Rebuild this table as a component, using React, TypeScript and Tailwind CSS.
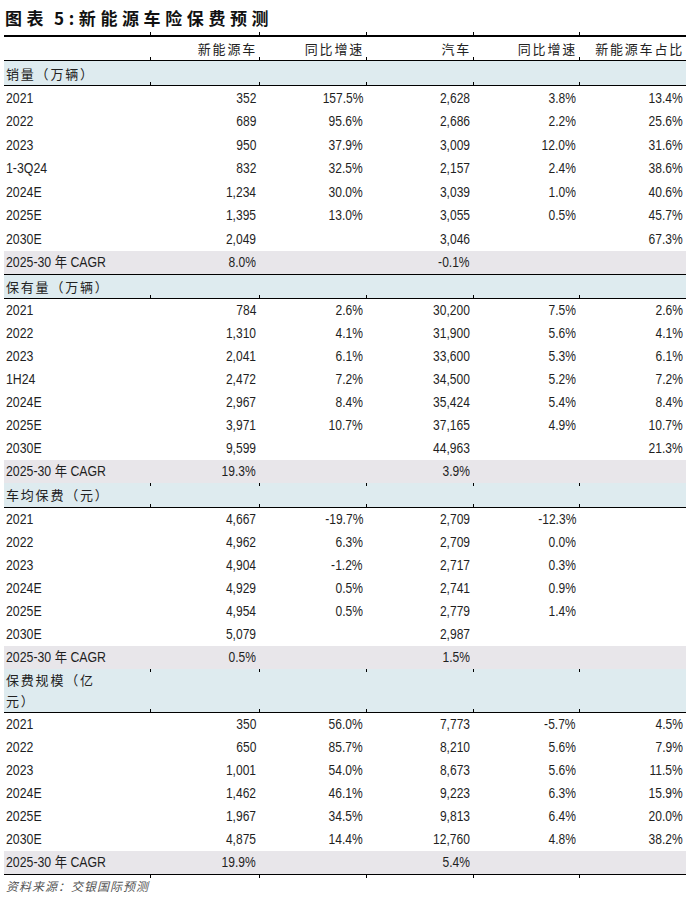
import React from "react";

type Row = [string, string, string, string, string, string];

const GRID = "grid grid-cols-[146px_109px_107px_107px_106px_107px]";
const NUM = "font-['Liberation_Sans','Noto_Sans_CJK_SC',Arial,sans-serif]";
const CJK = "font-['Noto_Sans_CJK_SC',sans-serif]";

// small tick marks drawn as background images at the left edge of a cell
const TICK_BOTTOM =
  "[background-image:linear-gradient(#000,#000)] [background-size:1px_3px] [background-repeat:no-repeat] [background-position:0_100%]";
const TICK_TOP =
  "[background-image:linear-gradient(#000,#000)] [background-size:1px_3px] [background-repeat:no-repeat] [background-position:0_0]";
const TICK_BOTH =
  "[background-image:linear-gradient(#000,#000),linear-gradient(#000,#000)] [background-size:1px_3px,1px_3px] [background-repeat:no-repeat,no-repeat] [background-position:0_0,0_100%]";

function TickStrip() {
  return (
    <div className={`${GRID} h-[3px]`}>
      <div />
      <div className={TICK_TOP} />
      <div className={TICK_TOP} />
      <div className={TICK_TOP} />
      <div className={TICK_TOP} />
      <div className={TICK_TOP} />
    </div>
  );
}

function Cells({ r }: { r: Row }) {
  return (
    <>
      <div className="pl-[2px] whitespace-nowrap">
        <span className="inline-block origin-left scale-x-[0.88]">{r[0]}</span>
      </div>
      {r.slice(1).map((c, i) => (
        <div key={i} className="text-right pr-[3px] whitespace-nowrap">
          <span className="inline-block origin-right scale-x-[0.86]">{c}</span>
        </div>
      ))}
    </>
  );
}

function DataRow({ r, h }: { r: Row; h: string }) {
  return (
    <div className={`${GRID} ${h} items-center text-[14px] leading-[18px] text-[#1f1f1f] ${NUM}`}>
      <Cells r={r} />
    </div>
  );
}

function CagrRow({ r }: { r: Row }) {
  return (
    <div className={`${GRID} h-[23px] items-center bg-[#e8e6ea] text-[14px] leading-[18px] text-[#1f1f1f] ${NUM}`}>
      <Cells r={r} />
    </div>
  );
}

function SectionRow({
  children,
  tall,
  border,
  topTicks,
}: {
  children: React.ReactNode;
  tall?: boolean;
  border?: boolean;
  topTicks?: boolean;
}) {
  const tick = topTicks ? TICK_BOTH : TICK_BOTTOM;
  return (
    <div
      className={`${GRID} ${tall ? "h-[44px]" : "h-[25px]"} ${
        border ? "border-t border-black" : ""
      } border-b border-black bg-[#deebef]`}
    >
      <div className={`flex items-center pl-[2px] text-[13px] leading-[21px] tracking-[1.8px] text-[#222] whitespace-nowrap ${CJK}`}>
        <div>{children}</div>
      </div>
      <div className={tick} />
      <div className={tick} />
      <div className={tick} />
      <div className={tick} />
      <div className={tick} />
    </div>
  );
}

const s1: Row[] = [
  ["2021", "352", "157.5%", "2,628", "3.8%", "13.4%"],
  ["2022", "689", "95.6%", "2,686", "2.2%", "25.6%"],
  ["2023", "950", "37.9%", "3,009", "12.0%", "31.6%"],
  ["1-3Q24", "832", "32.5%", "2,157", "2.4%", "38.6%"],
  ["2024E", "1,234", "30.0%", "3,039", "1.0%", "40.6%"],
  ["2025E", "1,395", "13.0%", "3,055", "0.5%", "45.7%"],
  ["2030E", "2,049", "", "3,046", "", "67.3%"],
];
const c1: Row = ["2025-30 年 CAGR", "8.0%", "", "-0.1%", "", ""];

const s2: Row[] = [
  ["2021", "784", "2.6%", "30,200", "7.5%", "2.6%"],
  ["2022", "1,310", "4.1%", "31,900", "5.6%", "4.1%"],
  ["2023", "2,041", "6.1%", "33,600", "5.3%", "6.1%"],
  ["1H24", "2,472", "7.2%", "34,500", "5.2%", "7.2%"],
  ["2024E", "2,967", "8.4%", "35,424", "5.4%", "8.4%"],
  ["2025E", "3,971", "10.7%", "37,165", "4.9%", "10.7%"],
  ["2030E", "9,599", "", "44,963", "", "21.3%"],
];
const c2: Row = ["2025-30 年 CAGR", "19.3%", "", "3.9%", "", ""];

const s3: Row[] = [
  ["2021", "4,667", "-19.7%", "2,709", "-12.3%", ""],
  ["2022", "4,962", "6.3%", "2,709", "0.0%", ""],
  ["2023", "4,904", "-1.2%", "2,717", "0.3%", ""],
  ["2024E", "4,929", "0.5%", "2,741", "0.9%", ""],
  ["2025E", "4,954", "0.5%", "2,779", "1.4%", ""],
  ["2030E", "5,079", "", "2,987", "", ""],
];
const c3: Row = ["2025-30 年 CAGR", "0.5%", "", "1.5%", "", ""];

const s4: Row[] = [
  ["2021", "350", "56.0%", "7,773", "-5.7%", "4.5%"],
  ["2022", "650", "85.7%", "8,210", "5.6%", "7.9%"],
  ["2023", "1,001", "54.0%", "8,673", "5.6%", "11.5%"],
  ["2024E", "1,462", "46.1%", "9,223", "6.3%", "15.9%"],
  ["2025E", "1,967", "34.5%", "9,813", "6.4%", "20.0%"],
  ["2030E", "4,875", "14.4%", "12,760", "4.8%", "38.2%"],
];
const c4: Row = ["2025-30 年 CAGR", "19.9%", "", "5.4%", "", ""];

export default function App() {
  const headers = ["新能源车", "同比增速", "汽车", "同比增速", "新能源车占比"];
  return (
    <div className="w-[688px] h-[902px] bg-white overflow-hidden">
      <div className="h-[32px] pl-[5px] pt-[6px]">
        <h1 className={`text-[17px] leading-[24px] font-bold tracking-[4.6px] text-[#111] ${CJK}`}>
          图表<span className="tracking-[2px]"> </span>5:新能源车险保费预测
        </h1>
      </div>
      <div className="ml-[4px] w-[682px] flex flex-col">
        <TickStrip />
        <div className={`${GRID} h-[26px] border-t-2 border-b border-black`}>
          <div />
          {headers.map((h, i) => (
            <div
              key={i}
              className={`flex items-center justify-end pr-[2px] text-[13px] tracking-[1.8px] text-[#222] ${CJK} ${TICK_BOTTOM}`}
            >
              {h}
            </div>
          ))}
        </div>

        <SectionRow>销量（万辆）</SectionRow>
        {s1.map((r, i) => (
          <DataRow key={i} r={r} h="h-[23.5px]" />
        ))}
        <CagrRow r={c1} />

        <SectionRow border>保有量（万辆）</SectionRow>
        {s2.map((r, i) => (
          <DataRow key={i} r={r} h="h-[23px]" />
        ))}
        <CagrRow r={c2} />

        <SectionRow topTicks>车均保费（元）</SectionRow>
        {s3.map((r, i) => (
          <DataRow key={i} r={r} h="h-[23px]" />
        ))}
        <CagrRow r={c3} />

        <SectionRow tall topTicks>
          保费规模（亿
          <br />
          元）
        </SectionRow>
        {s4.map((r, i) => (
          <DataRow key={i} r={r} h="h-[23px]" />
        ))}
        <CagrRow r={c4} />
        <div className="h-px bg-black" />
        <TickStrip />
      </div>
      <div className={`pl-[6px] text-[12px] leading-[16px] italic text-[#555] tracking-[1px] ${CJK}`}>
        资料来源：交银国际预测
      </div>
    </div>
  );
}
